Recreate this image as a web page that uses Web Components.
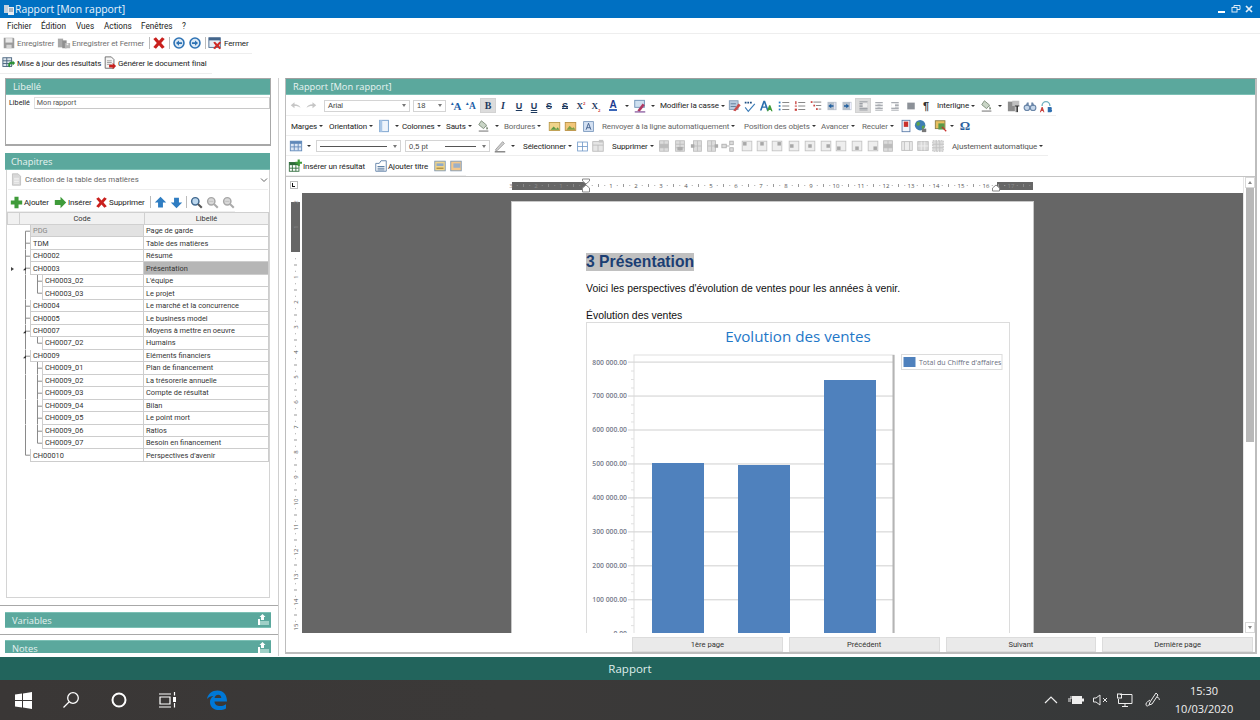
<!DOCTYPE html>
<html lang="fr"><head><meta charset="utf-8"><title>Rapport</title>
<style>
html,body{margin:0;padding:0;background:#fff}
body{width:1260px;height:720px;overflow:hidden;font:8px Roboto,"Open Sans",sans-serif;color:#222}
</style></head><body>
<app-window>
  <win-title>Rapport [Mon rapport]</win-title>
  <win-menu></win-menu>
  <tool-row set="top1" style="height:20px;padding-bottom:2px"></tool-row>
  <tool-row set="top2" style="height:20px;padding-bottom:2px"></tool-row>
  <app-main>
    <left-col>
      <label-box></label-box>
      <chapter-box></chapter-box>
      <fold-bar style="margin-top:6px">Variables</fold-bar>
      <split-line></split-line>
      <fold-bar style="height:13px;border-bottom:0">Notes</fold-bar>
    </left-col>
    <report-panel>
      <teal-head>Rapport [Mon rapport]</teal-head>
      <tool-row set="r1" style="height:21px"></tool-row>
      <tool-row set="r2" style="height:20px"></tool-row>
      <tool-row set="r3" style="height:20px"></tool-row>
      <tool-row set="r4" style="height:21px;border-bottom:1px solid #c4c4c4"></tool-row>
      <doc-view>
        <doc-page></doc-page>
      </doc-view>
      <nav-row></nav-row>
    </report-panel>
  </app-main>
  <status-bar>Rapport</status-bar>
  <task-bar></task-bar>
</app-window>
<script>
const svg=(n,s=16,st='')=>`<svg width="${s}" height="${s}" viewBox="0 0 16 16" style="display:block;${st}" aria-hidden="true">${IC[n]||''}</svg>`;
const lines=(c,xs,ys,x2=14)=>ys.map(y=>`<rect x="${xs}" y="${y}" width="${x2-xs}" height="1" fill="${c}"/>`).join('');
const cell=(x,y,w=4,h=4)=>`<rect x="2.5" y="2.5" width="11" height="11" fill="#eee" stroke="#c2c2c2"/><rect x="${x}" y="${y}" width="${w}" height="${h}" fill="#a8a8a8"/>`;
const IC={
 save:`<path d="M2 2h11l1 1v11H2z" fill="#9b9b9b"/><rect x="4" y="2.5" width="8" height="5" fill="#e8e8e8"/><rect x="5" y="10" width="6" height="4" fill="#d5d5d5"/>`,
 savec:`<path d="M1 3h6v10H1z" fill="#a9a9a9"/><path d="M6 5h5v9H6z" fill="#8f8f8f"/><path d="M9 8h6v6H9z" fill="#b5b5b5"/><rect x="11" y="8.5" width="2" height="2" fill="#eee"/>`,
 x:`<path d="M1.5 3.5 4.5 1.5 8 5.5 11.5 1.5 14.5 3.5 10.5 8 14.5 12.5 11.5 14.5 8 10.5 4.5 14.5 1.5 12.5 5.5 8z" fill="#c9201d"/>`,
 back:`<circle cx="8" cy="8" r="6.6" fill="#2d72b4"/><circle cx="8" cy="8" r="4.8" fill="#dce9f5"/><path d="M4.5 8 8 5v2h3.5v2H8v2z" fill="#2d72b4"/>`,
 fwd:`<circle cx="8" cy="8" r="6.6" fill="#2d72b4"/><circle cx="8" cy="8" r="4.8" fill="#dce9f5"/><path d="M11.5 8 8 5v2H4.5v2H8v2z" fill="#2d72b4"/>`,
 winx:`<rect x="1" y="2" width="13" height="11" fill="#e8eef5" stroke="#44668c"/><rect x="1" y="2" width="13" height="3" fill="#44668c"/><path d="M6 7.5 8 6.5 10.5 9.2 13 6.5 15 7.5 12.3 10.8 15 14 13 15 10.5 12.3 8 15 6 14 8.7 10.8z" fill="#cf2a25"/>`,
 upd:`<rect x="1" y="2" width="10" height="10" fill="#dfe7ee" stroke="#44607a"/>${lines('#44607a',1,[5,8],11)}<rect x="5" y="2" width="1" height="10" fill="#44607a"/><path d="M7 11c0-4 3-5 5-4V5l3 3-3 3V9c-2-.5-3 .5-3 4z" fill="#2a9134"/>`,
 gen:`<path d="M2.5 1h7l3 3v10h-10z" fill="#f5f5f5" stroke="#666"/>${lines('#999',4.5,[5,7,9],10)}<path d="M7 10h4V8l4 3.5L11 15v-2H7z" fill="#c9201d"/>`,
 doc:`<path d="M3 1h7l3 3v11H3z" fill="#d8d8d8" stroke="#bcbcbc"/>${lines('#f4f4f4',5,[6,8,10,12],11)}`,
 plus:`<path d="M5.5 1h5v4.5H15v5h-4.5V15h-5v-4.5H1v-5h4.5z" fill="#3f9b3a"/>`,
 right:`<path d="M1 5h7V1l7 7-7 7v-4H1z" fill="#3f9b3a"/>`,
 up:`<path d="M8 1l7 7h-4v6H5V8H1z" fill="#2f7dc2"/>`,
 down:`<path d="M8 15l7-7h-4V2H5v6H1z" fill="#2f7dc2"/>`,
 find:`<circle cx="6.5" cy="6.5" r="4.5" fill="#bcd7ee" stroke="#41688e" stroke-width="1.8"/><path d="M10 10l4.5 4.5" stroke="#555" stroke-width="2.6"/>`,
 findg:`<circle cx="6.5" cy="6.5" r="4.5" fill="#d8d8d8" stroke="#a7a7a7" stroke-width="1.8"/><path d="M10 10l4.5 4.5" stroke="#aaa" stroke-width="2.6"/>${lines('#bbb',4,[6],9)}`,
 undo:`<path d="M1 7l5-4v2.5c4 0 7 1.5 8 5-2-2-4-2.5-8-2.5V11z" fill="#c6c6c6"/>`,
 redo:`<path d="M15 7l-5-4v2.5c-4 0-7 1.5-8 5 2-2 4-2.5 8-2.5V11z" fill="#c6c6c6"/>`,
 hilite:`<rect x="2" y="1.5" width="11" height="8" fill="#cfe0f0" stroke="#6a8fb4"/><path d="M5 13 11 5l2.5 2-6 7.5z" fill="#b03a62"/><rect x="2" y="14" width="12" height="1.5" fill="#8a5ca0"/>`,
 caseic:`<rect x="1.5" y="2" width="10" height="10" fill="#b9cbe0" stroke="#7f99b5"/><path d="M6 13 12 5l2.5 2-6 7z" fill="#c94d4d"/>${lines('#5c7795',3,[5,8],9)}`,
 abc:`<path d="M2 4h9" stroke="#1f4f82" stroke-width="2" stroke-dasharray="2 1"/><path d="M3 9l3 4 7-8 1 1-8 9-4-5z" fill="#3a7bb7"/>`,
 aa:`<path d="M1 13 5 2h2l4 11H9L8 10H4l-1 3zM4.6 8.5h2.8L6 4.5z" fill="#2a6fae"/><path d="M9 14l2.5-7h1.5l2.5 7h-1.6l-.5-1.5h-2.3L10.6 14z" fill="#3f9b3a"/>`,
 bul:`<rect x="2" y="3" width="2" height="2" fill="#2f7dc2"/><rect x="2" y="7" width="2" height="2" fill="#2f7dc2"/><rect x="2" y="11" width="2" height="2" fill="#2f7dc2"/>${lines('#777',6,[3.5,7.5,11.5])}`,
 num:`<rect x="2.5" y="2.5" width="1.5" height="3.5" fill="#c9413d"/><rect x="2" y="7.5" width="2.5" height="1.2" fill="#c9413d"/><rect x="2" y="11" width="2.5" height="2.5" fill="#c9413d"/>${lines('#777',6,[3.5,7.5,11.5])}`,
 multi:`<rect x="2" y="2.5" width="2" height="2" fill="#c9413d"/><rect x="5" y="6.5" width="2" height="2" fill="#c9413d"/><rect x="8" y="10.5" width="2" height="2" fill="#c9413d"/>${lines('#777',5,[3])}${lines('#777',8,[7])}${lines('#777',11,[11])}`,
 out:`<rect x="2" y="2.5" width="12" height="11" fill="#b7c1cc"/><path d="M3 8l4-3v2h3v2H7v2z" fill="#1f5fa0"/><rect x="11" y="3.5" width="1.5" height="9" fill="#eef"/>`,
 ind:`<rect x="2" y="2.5" width="12" height="11" fill="#b7c1cc"/><path d="M11 8 7 5v2H4v2h3v2z" fill="#1f5fa0"/><rect x="12" y="3.5" width="1.5" height="9" fill="#eef"/>`,
 al:`${lines('#8c9198',3,[3,5,7,9,11,13],13)}<rect x="7" y="5" width="6" height="5" fill="#eee"/>`,
 ac:`${lines('#8c9198',3,[3,5,7,9,11,13],13)}<rect x="3" y="5" width="3" height="1" fill="#fff"/><rect x="10" y="5" width="3" height="1" fill="#fff"/><rect x="3" y="9" width="3" height="1" fill="#fff"/><rect x="10" y="9" width="3" height="1" fill="#fff"/>`,
 ar:`${lines('#8c9198',3,[3,5,7,9,11,13],13)}<rect x="3" y="5" width="5" height="5" fill="#fff"/>`,
 aj:`<rect x="3" y="3.5" width="10" height="9" fill="#8c9198"/>`,
 shade:`<path d="M5 2l6 5-3.5 4L2 6.5z" fill="#c9d5c6" stroke="#7c8a78"/><path d="M11 8c1 1.5 2 2.5 1.5 3.5s-2 .5-2-.5z" fill="#7c8a78"/><rect x="2" y="13" width="11" height="1.6" fill="#999"/>`,
 par:`<rect x="1" y="3" width="8" height="11" fill="#8d8d8d"/><rect x="6" y="2" width="8" height="6" fill="#c0c0c0"/><path d="M9 8h5M12 8v7M10.5 8v7" stroke="#222" stroke-width="1"/>`,
 bino:`<circle cx="4.5" cy="10" r="3.2" fill="#c4d6ea" stroke="#6a86a8" stroke-width="1.3"/><circle cx="11.5" cy="10" r="3.2" fill="#c4d6ea" stroke="#6a86a8" stroke-width="1.3"/><path d="M3 8l1.5-4h2v4M13 8l-1.5-4h-2v4" fill="#6a86a8"/>`,
 repl:`<path d="M3.500 8a4.500 5 0 0 1 9 0" fill="none" stroke="#6fb0c0" stroke-width="1.500"/><path d="M1 15l2-6h1.200l2 6H5l-.4-1.300H2.700L2.200 15z" fill="#c9413d"/><path d="M10 9h3.500c1.500 0 1.500 2.500.5 2.800 1.500.4 1.300 3.200-.5 3.200H10z" fill="#2f6fb0"/>`,
 pagecol:`<rect x="3" y="1.5" width="10" height="13" fill="#eef4fb" stroke="#6f9bca"/><rect x="3" y="1.5" width="3" height="13" fill="#a9c6e6"/>`,
 img1:`<rect x="1.5" y="3" width="13" height="10" fill="#f0d48a" stroke="#b59440"/><path d="M3 12l4-4 3 3 2-2 2 3z" fill="#5f9a45"/>`,
 img2:`<rect x="1.5" y="3" width="13" height="10" fill="#f2c679" stroke="#b48b3c"/><path d="M3 12l4-5 3 3 2-1 2 3z" fill="#7f9f45"/>`,
 tbx:`<rect x="2" y="2" width="12" height="12" fill="#d4e1f2" stroke="#6e8fb8"/><path d="M5 12 8 4l3 8M6 9.5h4" stroke="#2f4f80" fill="none"/>`,
 red:`<rect x="3.5" y="1.5" width="9" height="13" fill="#f4f6fa" stroke="#5a7ba8"/><rect x="5.5" y="3" width="5" height="6" fill="#c9302c"/>`,
 globe:`<circle cx="7" cy="7" r="6" fill="#3e7fb4"/><path d="M3 4l3-1 1 3-2 2-2-1zM9 8l3-1 0 3-3 2z" fill="#5da44b"/><path d="M9 11l5 0v4H9z" fill="#777"/>`,
 frame:`<rect x="1.5" y="2" width="11" height="9" fill="#e8c060" stroke="#8a7a40"/><rect x="5" y="5" width="7" height="7" fill="#5a9a4a"/><path d="M9 9l5 5" stroke="#c9302c" stroke-width="1.4"/>`,
 tbl:`<rect x="1.5" y="2.5" width="13" height="11" fill="#dbe6f4" stroke="#5e87b8"/><rect x="1.5" y="2.5" width="13" height="3" fill="#5e87b8"/><path d="M6 5v8M10.5 5v8M2 9h12" stroke="#5e87b8"/>`,
 pen:`<path d="M3 12 11 3l2 2-8 8H3z" fill="#cfcfcf" stroke="#9b9b9b"/><rect x="2" y="14" width="12" height="1.3" fill="#666"/>`,
 grid:`<rect x="2" y="2.5" width="12" height="11" fill="#fff" stroke="#6f98c8"/><path d="M8 2.5v11M2 8h12" stroke="#6f98c8"/>`,
 gridg:`<rect x="2" y="3" width="12" height="11" fill="#e6e6e6" stroke="#bbb"/><path d="M2 7h12M8 7v7" stroke="#bbb"/><rect x="9" y="1" width="5" height="3" fill="#c4c4c4"/>`,
 t1:`<rect x="3" y="2" width="10" height="12" fill="#ddd" stroke="#bdbdbd"/><path d="M3 6h10M3 10h10M8 2v12" stroke="#bdbdbd"/><rect x="3" y="6" width="10" height="4" fill="#bcbcbc"/>`,
 t2:`<rect x="3" y="2" width="10" height="12" fill="#ddd" stroke="#bdbdbd"/><path d="M3 6h10M3 10h10M8 2v12" stroke="#bdbdbd"/><rect x="5" y="9" width="6" height="4" fill="#ababab"/>`,
 t3:`<rect x="4" y="2" width="9" height="12" fill="#ddd" stroke="#bdbdbd"/><path d="M8.5 2v12M4 8h9" stroke="#bdbdbd"/><rect x="1" y="6" width="4" height="4" fill="#ababab"/>`,
 t4:`<rect x="3" y="2" width="9" height="12" fill="#ddd" stroke="#bdbdbd"/><path d="M7.5 2v12M3 8h9" stroke="#bdbdbd"/><rect x="11" y="6" width="4" height="4" fill="#ababab"/>`,
 t5:`<rect x="1" y="6" width="5" height="4" fill="#ddd" stroke="#b0b0b0"/><rect x="10" y="2.5" width="4" height="4" fill="#ddd" stroke="#b0b0b0"/><rect x="10" y="10" width="4" height="4" fill="#ddd" stroke="#b0b0b0"/><path d="M6 8h4" stroke="#aaa"/>`,
 c1:cell(3.5,3.5),c2:cell(6,3.5),c3:cell(8.5,3.5),c4:cell(3.5,6),c5:cell(6,6),c6:cell(8.5,6),c7:cell(3.5,8.5),c8:cell(6,8.5),c9:cell(8.5,8.5),
 m1:`<rect x="2" y="3" width="12" height="10" fill="#eee" stroke="#bdbdbd"/><path d="M5 3v10M11 3v10" stroke="#bdbdbd"/>`,
 m2:`<rect x="2" y="3" width="12" height="10" fill="#d8d8d8" stroke="#bdbdbd"/><path d="M6 3v10M10 3v10M2 8h12" stroke="#f0f0f0"/>`,
 m3:`<rect x="2" y="2" width="12" height="12" fill="#ddd" stroke="#bdbdbd" stroke-dasharray="2 1"/><path d="M2 6h12M2 10h12M6 2v12M10 2v12" stroke="#c2c2c2"/>`,
 tins:`<rect x="1.5" y="4" width="11" height="10" fill="#fff" stroke="#2e6b3a"/><rect x="1.5" y="4" width="11" height="3" fill="#2e6b3a"/><path d="M5 7v7M9 7v7M2 10.5h10" stroke="#2e6b3a"/><path d="M11 .5h2.5V3H16v2.5h-2.5V8H11V5.5H8.5V3H11z" fill="#3f9b3a"/>`,
 title:`<path d="M2 5h4l2-3h6v12H2z" fill="#fff" stroke="#5b7ea5"/>${lines('#4a6f98',4,[8,10,12],12)}`,
 rep1:`<rect x="2" y="2.5" width="12" height="11" fill="#f0d48a" stroke="#7f99b5"/><rect x="4" y="5" width="8" height="3" fill="#8faac8"/><path d="M4 10.5h8" stroke="#8a6a20"/>`,
 rep2:`<rect x="2" y="2.5" width="12" height="11" fill="#f3c78b" stroke="#7f99b5"/><rect x="5" y="5" width="8" height="5" fill="#9cb0c8"/>`,
};
const I=(c,n,s=14)=>({x:c-8,w:16,h:svg(n,s)});
const C=(c)=>({x:c-4,w:8,h:'<i class="k"></i>'});
const S=(c)=>({x:c-1,w:2,h:'<i class="sep"></i>'});
const T=(x,w,t,o={})=>({x,w,h:`<span class="t" style="color:${o.c||'#222'};${o.s||''}">${t}</span>${o.k?'<i class="k"></i>':''}`,left:1});
const G=(c,t,s='')=>({x:c-8,w:16,h:`<span class="g" style="${s}">${t}</span>`});
const Bg=(x,w,inner)=>({x,w,h:inner,on:1});
const SEL=(x,w,t)=>({x,w,h:`<span class="sel"><span>${t}</span><i class="k2"></i></span>`,left:1});
const LSEL=(x,w,t)=>({x,w,h:`<span class="sel">${t?`<span style="width:32px;flex:none">${t}</span>`:''}<b></b><i class="k2"></i></span>`,left:1});
const SETS={
 top1:{o:0,line:252,items:[I(9,'save'),T(17,38,'Enregistrer',{c:'#707070'}),I(64,'savec'),T(72,73,'Enregistrer et Fermer',{c:'#707070'}),S(149),I(159,'x'),S(169),I(179,'back'),I(195,'fwd'),S(205),I(215,'winx'),T(224,25,'Fermer')]},
 top2:{o:0,line:212,items:[I(9,'upd'),T(17,84,'Mise à jour des résultats'),I(110,'gen'),T(118,91,'Générer le document final')]},
 r1:{o:286,line:1056,items:[I(296,'undo',12),I(311,'redo',12),SEL(324,86,'Arial'),SEL(413,33,'18'),
   G(456,'<sup>▴</sup>A','color:#1f5fa8;font:bold 11px Liberation Serif'),G(471,'<sup>▴</sup>A','color:#1f5fa8;font:bold 9.5px Liberation Serif'),
   Bg(480,16,'<span class="g" style="font:bold 10px Liberation Serif;color:#1e3a5f">B</span>'),
   G(503,'I','font:italic bold 10px Liberation Serif;color:#1e3a5f'),G(519,'U','font:bold 9px Liberation Sans;text-decoration:underline;color:#1e3a5f'),G(534,'U','font:bold 9px Liberation Sans;text-decoration:underline double;color:#1e3a5f'),G(549,'S','font:bold 9px Liberation Sans;text-decoration:line-through;color:#1e3a5f'),G(565,'S','font:bold 9px Liberation Sans;text-decoration:line-through double;color:#1e3a5f'),
   G(581,'X<sup style="color:#c9302c;font-size:5px">2</sup>','font:bold 9px Liberation Serif;color:#1e3a5f'),G(596,'X<sub style="color:#c9302c;font-size:5px">2</sub>','font:bold 9px Liberation Serif;color:#1e3a5f'),
   G(613,'A','font:bold 10px Liberation Sans;color:#1e3a8f;border-bottom:2px solid #3a66b8;line-height:9px'),C(626),I(640,'hilite'),C(652),
   T(660,60,'Modifier la casse',{k:1}),I(735,'caseic'),I(750,'abc'),I(766,'aa'),I(784,'bul'),I(800,'num'),I(816,'multi'),I(832,'out',12),I(847,'ind',12),
   Bg(855,16,svg('al',13)),I(879,'ac',12),I(895,'ar',12),I(911,'aj',12),G(926,'¶','font:bold 11px Liberation Sans;color:#333'),T(937,38,'Interligne',{k:1}),I(987,'shade'),C(999),I(1014,'par'),I(1030,'bino'),I(1046,'repl')]},
 r2:{o:286,line:950,items:[T(291,32,'Marges',{k:1}),T(329,45,'Orientation',{k:1}),I(384,'pagecol'),C(396),T(402,38,'Colonnes',{k:1}),T(446,24,'Sauts',{k:1}),I(484,'shade'),C(496),T(504,37,'Bordures',{c:'#666',k:1}),I(554,'img1',13),I(570,'img2',13),I(588,'tbx',13),T(602,136,'Renvoyer à la ligne automatiquement',{c:'#666',k:1}),T(744,71,'Position des objets',{c:'#666',k:1}),T(821,35,'Avancer',{c:'#666',k:1}),T(862,31,'Reculer',{c:'#666',k:1}),I(906,'red'),I(921,'globe'),I(941,'frame'),C(951),G(965,'Ω','font:bold 13px Liberation Serif;color:#2a5f9e')]},
 r3:{o:286,line:1048,items:[I(296,'tbl'),C(308),LSEL(316,85,''),LSEL(405,85,'0,5 pt'),I(500,'pen'),C(512),T(523,47,'Sélectionner',{k:1}),I(582,'grid',13),I(598,'gridg'),T(612,42,'Supprimer',{k:1}),I(664,'t1'),I(680,'t2'),I(697,'t3'),I(712,'t4'),I(728,'t5'),I(747,'c1'),I(762,'c2'),I(777,'c3'),I(794,'c4'),I(810,'c5'),I(826,'c6'),I(841,'c7'),I(857,'c8'),I(873,'c9'),I(888,'t1'),I(907,'m1'),I(923,'m2'),I(938,'m3'),T(952,93,'Ajustement automatique',{c:'#555',k:1})]},
 r4:{o:286,line:466,items:[I(295,'tins'),T(303,64,'Insérer un résultat'),I(381,'title'),T(388,43,'Ajouter titre'),I(440,'rep1'),I(456,'rep2')]},
 chap:{o:7,line:235,items:[I(16,'plus',13),T(24,26,'Ajouter'),I(60,'right',13),T(68,24,'Insérer'),I(101,'x',13),T(109,37,'Supprimer'),S(150),I(160,'up',13),I(176,'down',13),S(186),I(196,'find',13),I(212,'findg',13),I(228,'findg',13)]},
};
const el=(name,css,html='<slot></slot>')=>customElements.define(name,class extends HTMLElement{constructor(){super();this.attachShadow({mode:'open'}).innerHTML=`<style>${css}</style>${typeof html==='function'?html():html}`}});

el('app-window',':host{display:flex;flex-direction:column;width:1260px;height:720px;overflow:hidden}');
el('win-title',`:host{display:flex;align-items:center;height:18px;background:#0070c2;color:#eaf4fc;font:10.4px "Open Sans",sans-serif;flex:none}
 .lbl{margin-left:1px}.ic{margin-left:4px}.ctl{margin-left:auto;display:flex;gap:1px;margin-right:5px}`,
 ()=>`<svg class="ic" width="10" height="11" viewBox="0 0 10 11"><rect x="0" y="1" width="5" height="8" fill="#c4d2de"/><rect x="4" y="3" width="6" height="8" fill="#e8edf2"/><path d="M5 5h4M5 7h4" stroke="#6a7f92"/></svg><span class="lbl"><slot></slot></span><span class="ctl">
 <svg width="12" height="12" viewBox="0 0 12 12"><rect x="1" y="8" width="7" height="2" fill="#fff"/></svg>
 <svg width="12" height="12" viewBox="0 0 12 12" fill="none" stroke="#dbe9f5"><rect x="2" y="4.5" width="5" height="4.5"/><path d="M4 4.5V2.5h6v4H7"/></svg>
 <svg width="12" height="12" viewBox="0 0 12 12"><path d="M3 3l6 6M9 3l-6 6" stroke="#e4eff8" stroke-width="1.7"/></svg></span>`);
el('win-menu',`:host{display:flex;height:15px;align-items:center;border-bottom:1px solid #eee;flex:none;font:8.2px Roboto,sans-serif;color:#222}
 span{flex:none;white-space:nowrap}`,()=>[['Fichier',7,24],['Édition',41,25],['Vues',76,18],['Actions',104,27],['Fenêtres',141,30],['?',182,6]].reduce((a,[t,x,w])=>{a.s+=`<span style="margin-left:${x-a.e}px;width:${w}px">${t}</span>`;a.e=x+w;return a},{s:'',e:0}).s);

class ToolRow extends HTMLElement{
 constructor(){super();this.attachShadow({mode:'open'})}
 connectedCallback(){
  const d=SETS[this.getAttribute('set')];let e=d.o,s='';
  for(const it of d.items){s+=`<div class="it${it.on?' on':''}" style="margin-left:${it.x-e}px;width:${it.w}px;${it.left?'justify-content:flex-start':''}">${it.h}</div>`;e=it.x+it.w}
  this.shadowRoot.innerHTML=`<style>
  :host{display:flex;align-items:center;flex:none;box-sizing:border-box;font:8px Roboto,sans-serif;position:relative}
  .it{display:flex;align-items:center;justify-content:center;flex:none;height:15px;white-space:nowrap}
  .on{background:#dcdcdc;outline:1px solid #d2d2d2;outline-offset:-1px}
  .t{flex:none;letter-spacing:-.12px}
  .k{display:block;flex:none;width:0;height:0;border:2px solid transparent;border-top:2.5px solid #333;border-bottom:0;margin-left:2px}
  .sep{display:block;width:1px;height:12px;background:#bbb}
  .g{line-height:12px;white-space:nowrap}
  sup,sub{font-size:5px;line-height:0}
  .sel{flex:1;display:flex;align-items:center;height:12px;box-sizing:border-box;border:1px solid #d4d4d4;padding:0 3px;gap:4px;font:7.5px "Liberation Sans",sans-serif;color:#444;background:#fff}
  .sel span:first-child{flex:1}
  .sel b{flex:1;height:1px;background:#555;margin-right:2px}
  .k2{display:block;flex:none;width:0;height:0;border:2.5px solid transparent;border-top:3px solid #777;border-bottom:0}
  .ln{position:absolute;bottom:0;height:1px;background:#eee}
  </style>${s}<i class="ln" style="left:0;width:${d.line-d.o}px"></i>`;
 }
}
customElements.define('tool-row',ToolRow);

el('app-main',':host{display:flex;height:578px;margin-top:4px;flex:none}');
el('left-col',':host{display:flex;flex-direction:column;width:278px;border-right:1px solid #cfcfcf;flex:none;overflow:hidden;height:578px}');
el('split-line',':host{display:block;flex:none;height:1px;background:#a8a8a8;margin:6px 0 5px 0}');
el('teal-head',':host{display:flex;align-items:center;flex:none;height:16px;padding-left:7px;background:#5ba89d;border-bottom:1px solid #7cc0b5;box-sizing:border-box;color:#e9f4f2;font:9.3px "Open Sans",sans-serif}');
el('label-box',`:host{display:block;margin-left:5px;width:266px;height:68px;box-sizing:border-box;border:1px solid #a8a8a8;border-bottom-width:2px;flex:none;background:#fff}
 .b{display:flex;align-items:center;height:13px;margin-top:1px;padding-left:3px;font:7.2px Roboto,sans-serif}
 .v{margin-left:4px;width:236px;height:12px;box-sizing:border-box;border:1px solid #e0e0e0;border-bottom-color:#c8c8c8;border-right-color:#c8c8c8;padding-left:2px;color:#555;line-height:10px}`,
 `<teal-head>Libellé</teal-head><div class="b"><span>Libellé</span><div class="v">Mon rapport</div></div>`);
el('chapter-tree',`:host{display:block;width:262px;font:7.4px Roboto,sans-serif;color:#333}
 .h,.r{display:flex;box-sizing:border-box}
 .h{height:13px;background:#f1f1f1;border:1px solid #d0d0d0;border-width:1px 1px 1px 0}
 .h div{display:flex;align-items:center;justify-content:center;border-left:1px solid #d0d0d0;box-sizing:border-box;width:125px}
 .h .i{width:12px}
 .h div:last-child{flex:1}
 .r{height:12.47px;align-items:stretch}
 .ind{width:11px;flex:none;display:flex;align-items:center;justify-content:center}
 .ind i{display:block;width:0;height:0;border:2px solid transparent;border-left:3px solid #444;border-right:0}
 svg{flex:none;display:block}
 .c,.l{display:flex;align-items:center;box-sizing:border-box;border:1px solid #cdcdcd;border-width:0 1px 1px 0;padding-left:2px;white-space:nowrap;overflow:hidden}
 .c{flex:1;min-width:0;border-left:1px solid #cdcdcd}
 .l{width:125px;flex:none;padding-left:2px}`,
 ()=>{const R=[['PDG','Page de garde',0],['TDM','Table des matières',0],['CH0002','Résumé',0],['CH0003','Présentation',0,'s'],['CH0003_02',"L'équipe",1],['CH0003_03','Le projet',1,'e'],['CH0004','Le marché et la concurrence',0],['CH0005','Le business model',0],['CH0007','Moyens à mettre en oeuvre',0],['CH0007_02','Humains',1,'e'],['CH0009','Eléments financiers',0],['CH0009_01','Plan de financement',1],['CH0009_02','La trésorerie annuelle',1],['CH0009_03','Compte de résultat',1],['CH0009_04','Bilan',1],['CH0009_05','Le point mort',1],['CH0009_06','Ratios',1],['CH0009_07','Besoin en financement',1,'e'],['CH00010',"Perspectives d'avenir",0]];
 const par=new Set(['CH0003','CH0007','CH0009']);
 return `<div class="h"><div class="i"></div><div>Code</div><div>Libellé</div></div>`+R.map((r,i)=>{
  const lev=r[2],w=lev?24:12,y=6.2;
  let s='';
  const t=i===0?y:0,b=i===R.length-1?y:12.47;
  s+=`<path d="M7.5 ${t}V${b}" stroke="#8a8a8a"/>`;
  if(lev){s+=`<path d="M19.5 0V${r[3]==='e'?y:12.47}M19.5 ${y}H24" stroke="#8a8a8a"/>`}else s+=`<path d="M7.5 ${y}H12" stroke="#8a8a8a"/>`;
  if(par.has(r[0]))s+=`<path d="M5 ${y+2}l3-3v3z" fill="#333"/>`;
  const st=i===0?'background:#e2e2e2;color:#888':'';
  const sl=i===3?'background:#b6b6b6':'';
  return `<div class="r"><div class="ind">${i===3?'<i></i>':''}</div><svg width="${w}" height="12.47" viewBox="0 0 ${w} 12.47">${s}</svg><div class="c" style="${st}">${r[0]}</div><div class="l" style="${sl}">${r[1]}</div></div>`}).join('')});
el('chapter-box',`:host{display:block;margin-top:7px;flex:none;border-bottom:1px solid #a8a8a8;height:453px;box-sizing:border-box}
 teal-head{margin-left:5px;width:265px;height:17px;padding-left:6px}
 .w{margin:0 0 0 6px;width:264px;height:428px;box-sizing:border-box;border:1px solid #d4d4d4;border-top:0}
 .acc{display:flex;align-items:center;height:19px;margin:0 1px;border-bottom:1px solid #eee;color:#666;font:7.8px Roboto,sans-serif}
 .acc svg:first-child{margin:0 2px 0 2px}
 .acc .ch{margin-left:auto;margin-right:0}`,
 ()=>`<teal-head>Chapitres</teal-head><div class="w"><div class="acc">${svg('doc',13)}<span>Création de la table des matières</span><svg class="ch" width="8" height="8" viewBox="0 0 8 8"><path d="M1 2.5l3 3 3-3" fill="none" stroke="#666"/></svg></div><tool-row set="chap" style="height:20px;margin-top:2px"></tool-row><chapter-tree></chapter-tree></div>`);
el('fold-bar',`:host{display:flex;align-items:flex-start;flex:none;margin-left:5px;width:266px;height:16px;box-sizing:border-box;background:#5ba89d;border-bottom:1px solid #7cc0b5;border-top:1px solid #7cc0b5;color:#e4f1ef;font:9.3px "Open Sans",sans-serif;padding-left:7px}
 svg{margin-left:auto;margin-right:2px;flex:none;height:12px}
 span{flex:none;line-height:16px}`,
 `<span><slot></slot></span><svg width="12" height="12" viewBox="0 0 12 12"><path d="M4.5 0 7.5 3H6v3H3V3H1.5z" fill="#fff" transform="translate(1 1)"/><rect x="2" y="8" width="10" height="4" fill="#9fd0c7"/><rect x="1" y="6" width="2" height="6" fill="#fff"/></svg>`);
el('report-panel',`:host{display:flex;flex-direction:column;margin-left:6px;width:972px;height:576px;box-sizing:border-box;border:2px solid #bdbdbd;border-top:1px solid #9f9f9f;border-left:1px solid #bdbdbd;flex:none;overflow:hidden}`);
el('doc-view',`:host{display:flex;flex:none;height:456px}
 .l{flex:1;min-width:0;display:flex;flex-direction:column}
 .rul{display:flex;height:16px;flex:none;align-items:flex-start}
 .lbox{width:8px;height:8px;box-sizing:border-box;border:1px solid #bbb;margin:4px 2px 0 4px;flex:none;position:relative;background:#fff}
 .lbox i{position:absolute;left:1px;top:1px;width:2px;height:3px;border-left:1px solid #111;border-bottom:1px solid #111}
 .main{flex:1;display:flex;min-height:0}
 .vr{width:16px;flex:none}
 .ws{flex:1;background:#666;overflow:hidden;min-width:0}
 .sb{width:12px;flex:none;display:flex;flex-direction:column;align-items:center;box-sizing:border-box;border-left:1px solid #e6e6e6}
 .btn{width:10px;height:11px;box-sizing:border-box;border:1px solid #d8d8d8;display:flex;align-items:center;justify-content:center;flex:none}
 .btn i{width:0;height:0;border:2px solid transparent}
 .th{width:8px;height:254px;background:#b8b8b8;flex:none}
 .tr{flex:1}
 svg{display:block}
 text{font-family:"Open Sans",sans-serif}`,
 ()=>{let h='';const X0=300;
  h+=`<rect x="212" y="5" width="74" height="8" fill="#666"/><rect x="697" y="5" width="36" height="8" fill="#666"/>`;
  for(let n=-3;n<=17;n++){const cx=586+n*25-X0;const dark=n<0||n>=17;
   if(n!==0)h+=`<text x="${cx}" y="11" font-size="6" text-anchor="middle" fill="${dark?'#8c8c8c':'#555'}">${Math.abs(n)}</text>`;
   for(const k of [1,2,3]){const x=cx+k*6.25;if(x<212||x>733)continue;h+=k===2?`<rect x="${x-.5}" y="7" width="1" height="3" fill="${dark?'#888':'#999'}"/>`:`<rect x="${x-.5}" y="8" width="1" height="1" fill="${dark?'#888':'#aaa'}"/>`}}
  h+=`<path d="M282.5 2h7v2l-3.5 3-3.500-3z" fill="#fff" stroke="#888"/><path d="M286 8l3.5 3v4h-7v-4z" fill="#fff" stroke="#888"/><path d="M692.5 11l3.5-3 3.5 3v3h-7z" fill="#fff" stroke="#888"/>`;
  let v=`<rect x="5" y="9" width="9" height="50" fill="#666"/>`;
  for(let n=-2;n<=15;n++){const cy=59+n*25;const d=n<0;if(n)v+=`<text transform="translate(11.5 ${cy}) rotate(-90)" font-size="6" text-anchor="middle" fill="${d?'#8c8c8c':'#555'}">${Math.abs(n)}</text>`;
   for(const k of [1,2,3]){const y=cy+k*6.25;if(y<60||y>440)continue;v+=k===2?`<rect x="8" y="${y}" width="3" height="1" fill="#999"/>`:`<rect x="9" y="${y}" width="1" height="1" fill="#aaa"/>`}}
  return `<div class="l"><div class="rul"><div class="lbox"><i></i></div><svg width="943" height="16" viewBox="0 0 943 16" style="flex:none">${h}</svg></div>
  <div class="main"><svg class="vr" width="16" height="440" viewBox="0 0 16 440">${v}</svg><div class="ws"><slot></slot></div></div></div>
  <div class="sb"><div class="btn"><i style="border-bottom:3px solid #888;border-top:0"></i></div><div class="th"></div><div class="tr"></div><div class="btn"><i style="border-top:3px solid #888;border-bottom:0"></i></div></div>`});
el('doc-page',`:host{display:block;margin:8px 0 0 209px;width:523px;height:700px;box-sizing:border-box;background:#fff;border:1px solid #c8c8c8;padding:51px 0 0 74px;color:#111;font:10.45px "Liberation Sans",Arial,sans-serif}
 h1{margin:0;font:bold 15.7px/18px "Liberation Sans",Arial,sans-serif;color:#1b3e73;height:18px}
 h1 span{background:#c0c0c0;display:inline-block;height:18px}
 p{margin:0;height:14px;line-height:14px;white-space:nowrap}
 .a{margin-top:11px}.b{margin-top:13px}`,
 `<h1><span>3 Présentation</span></h1><p class="a">Voici les perspectives d'évolution de ventes pour les années à venir.</p><p class="b" style="height:13px">Évolution des ventes</p><sales-chart></sales-chart>`);
el('sales-chart',`:host{display:block;width:424px;height:340px;box-sizing:border-box;border:1px solid #dcdcdc;border-bottom:0}
 svg{display:block}text{font-family:"Open Sans",sans-serif}`,
 ()=>{let g='';const L=['800 000.00','700 000.00','600 000.00','500 000.00','400 000.00','300 000.00','200 000.00','100 000.00','0.00'];
 L.forEach((t,i)=>{const y=362+i*33.95;g+=`<rect x="628" y="${y-.5}" width="265" height="1.2" fill="#d8d8d8"/><text x="627" y="${y+2.5}" font-size="6.8" font-weight="600" text-anchor="end" fill="#777b8c">${t}</text>`;
  for(const k of [.25,.5,.75]){g+=`<rect x="631" y="${y+k*34}" width="3" height="1" fill="#e0e0e0"/>`}});
 return `<svg width="422" height="340" viewBox="587 323 422 340">
 <text x="798" y="342" font-size="15.2" text-anchor="middle" fill="#1f78c8">Evolution des ventes</text>
 <rect x="634" y="355" width="260" height="300" fill="#fff" stroke="#e0e0e0"/>${g}
 <rect x="892.5" y="355" width="2" height="300" fill="#b4b4b4"/>
 <rect x="652" y="463" width="52" height="200" fill="#4f81bd"/><rect x="738" y="465" width="52" height="200" fill="#4f81bd"/><rect x="824" y="380" width="52" height="290" fill="#4f81bd"/>
 <rect x="901.5" y="354.5" width="100.5" height="15" fill="#fff" stroke="#dcdcdc"/><rect x="903.5" y="357" width="12" height="10" fill="#4f81bd"/>
 <text x="919" y="364.5" font-size="7" fill="#6a6f80">Total du Chiffre d'affaires</text></svg>`});
el('nav-row',`:host{display:grid;grid-template-columns:repeat(4,150.75px);gap:6px;flex:none;height:19px;box-sizing:border-box;padding:4px 0 0 346px;font:7.6px Roboto,sans-serif;color:#333}
 div{display:flex;align-items:center;justify-content:center;background:#eaeaea;border:1px solid #dcdcdc;box-sizing:border-box}`,
 `<div>1ère page</div><div>Précédent</div><div>Suivant</div><div>Dernière page</div>`);
el('status-bar',`:host{display:flex;align-items:center;justify-content:center;flex:none;height:23px;margin-top:1px;background:#22645c;color:#dfeeeb;font:11.5px "Open Sans",sans-serif}`);
el('task-bar',`:host{display:flex;align-items:center;flex:none;height:40px;background:linear-gradient(90deg,#3a3736 0,#3b3938 40%,#36393a 100%);color:#f0f0f0;font:11px "Open Sans",sans-serif}
 .s{display:flex;align-items:center;justify-content:center;flex:none;width:48px;height:40px}
 .r{margin-left:auto;display:flex;align-items:center;height:40px}
 .tm{display:flex;flex-direction:column;align-items:center;line-height:18px;width:84px;margin-left:1px;margin-right:14px}
 svg{display:block}`,
 `<div class="s" style="margin-left:-1px"><svg width="17" height="17" viewBox="0 0 17 17" fill="#fff"><path d="M0 2.6 7 1.6V8H0zM8 1.4 17 0V8H8zM0 9h7v6.4L0 14.4zM8 9h9v8l-9-1.4z"/></svg></div>
 <div class="s"><svg width="18" height="18" viewBox="0 0 18 18" fill="none" stroke="#fff" stroke-width="1.3"><circle cx="11" cy="7" r="5.3"/><path d="M7 11 1.5 16.5"/></svg></div>
 <div class="s"><svg width="16" height="16" viewBox="0 0 16 16" fill="none" stroke="#fff" stroke-width="2"><circle cx="8" cy="8" r="6.5"/></svg></div>
 <div class="s"><svg width="17" height="16" viewBox="0 0 17 16" fill="none" stroke="#fff" stroke-width="1.2"><path d="M0 2h12M0 15h12M1 5h10v7H1z"/><path d="M15.5 0v3.5M15.5 11v4.5"/><rect x="14" y="5" width="3" height="5" fill="#fff" stroke="none"/></svg></div>
 <div class="s" style="margin-left:2px"><svg width="20" height="20" viewBox="0 0 20 20"><path fill="#0078d7" fill-rule="evenodd" d="M0 9C1 4 5 .6 10.5.6 16.5.6 20 5 20 11.5H7.5c0 5 7 6 11.5 2.7v4.3c-5 3-16 2.5-16-6.5 0-2.5 1-4.5 3.5-6C4 6 1.5 7 0 9zM7.5 8h6.8c0-4.5-6-4.5-6.8 0z"/></svg></div>
 <div class="r">
  <svg width="14" height="8" viewBox="0 0 14 8" fill="none" stroke="#eee" stroke-width="1.2"><path d="M1 7l6-6 6 6"/></svg>
  <svg style="margin-left:10px" width="16" height="12" viewBox="0 0 16 12"><rect x="4" y="2" width="10" height="8" fill="#eee"/><rect x="14" y="4.5" width="2" height="3" fill="#eee"/><path d="M0 5h3V2M0 7h3" stroke="#eee" fill="none"/></svg>
  <svg style="margin-left:9px" width="15" height="12" viewBox="0 0 15 12" fill="none" stroke="#e8e8e8"><path d="M.5 4h2.5L7 1v10L3 8H.5z"/><path d="M10 4l4 4M14 4l-4 4"/></svg>
  <svg style="margin-left:9px" width="16" height="15" viewBox="0 0 16 15" fill="none" stroke="#eee"><path d="M3 1.5h12v9H1.5V6"/><path d="M8 10.5v3M5 13.5h6"/><rect x=".5" y="1" width="4" height="4"/></svg>
  <svg style="margin-left:12px" width="16" height="16" viewBox="0 0 16 16" fill="none" stroke="#eee"><path d="M11 1 5 10l-1 3 3-1 6-9zM4 13c-1 1-3 2-3-1 0-2 3-3 4-4M12 5c2 1 3 2 2 3"/></svg>
  <div class="tm"><span>15:30</span><span>10/03/2020</span></div>
 </div>`);
</script>
</body></html>
